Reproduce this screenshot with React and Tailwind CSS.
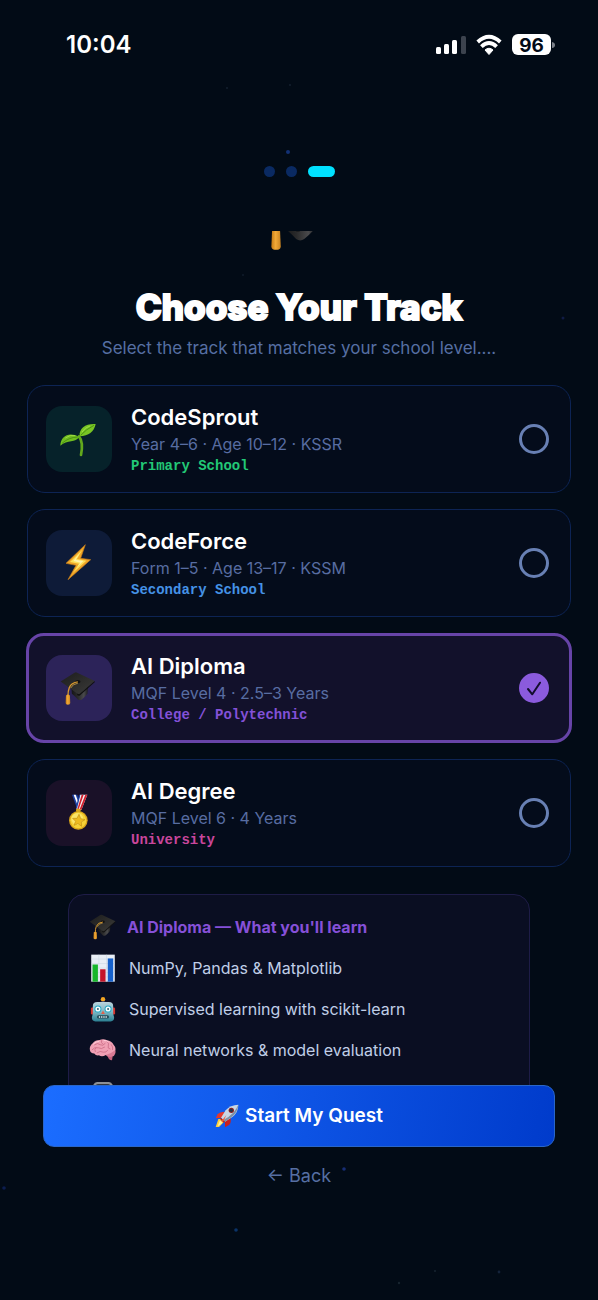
import { useState } from "react";

function CapIcon({ className }) {
  return (
    <svg viewBox="58 62 118 104" className={className} aria-hidden="true">
      <defs>
        <linearGradient id="skull" x1="0" x2="1">
          <stop offset="0" stopColor="#141414" />
          <stop offset="0.4" stopColor="#2a2a2b" />
          <stop offset="0.75" stopColor="#4a4a4c" />
          <stop offset="1" stopColor="#1b1b1c" />
        </linearGradient>
        <linearGradient id="board" x1="0" y1="0" x2="1" y2="1">
          <stop offset="0" stopColor="#1c1c1c" />
          <stop offset="1" stopColor="#3c3c3a" />
        </linearGradient>
        <linearGradient id="tassel" x1="0" x2="1">
          <stop offset="0" stopColor="#c47a14" />
          <stop offset="0.45" stopColor="#f3aa38" />
          <stop offset="1" stopColor="#c98320" />
        </linearGradient>
      </defs>
      <path d="M92 108 L94 130 Q104 138 112 147 Q118 151 124 147 Q134 139 141 130 L143 106 Z" fill="url(#skull)" />
      <path d="M60 93 L102 66 Q106 64 110 66 L163 91 L118 130 Q114 132 110 129 Z" fill="url(#board)" />
      <path d="M110 129 Q114 132 118 130 L163 91 L163 95 L118 135 Q114 137 110 134 Z" fill="#111" />
      <ellipse cx="112" cy="93" rx="8" ry="5" fill="#101010" />
      <path d="M112 94 Q92 96 86 112 Q82 122 82 138" fill="none" stroke="#d99a2e" strokeWidth="4" />
      <path d="M112 98 Q96 100 90 113" fill="none" stroke="#f0b94d" strokeWidth="2" />
      <path d="M76 135 Q82 130 88 135 L89 158 Q89 163 82 163 Q75 163 75 158 Z" fill="url(#tassel)" />
    </svg>
  );
}

function SproutIcon() {
  return (
    <svg viewBox="18 18 198 198" className="size-full" aria-hidden="true">
      <path d="M117 109 C129 124 126 150 123 165" fill="none" stroke="#62a91c" strokeWidth="8" strokeLinecap="round" />
      <path d="M61 137 C62 108 88 94 117 111 C108 129 82 119 61 137 Z" fill="#70bd20" />
      <path d="M119 109 C116 84 138 70 167 72 C162 96 146 107 119 109 Z" fill="#78c524" />
      <path d="M66 130 Q86 112 113 111 M122 106 Q138 88 162 76" fill="none" stroke="#4c9413" strokeWidth="3" />
      <path d="M76 114 Q90 103 106 107 M126 96 Q135 82 150 78" fill="none" stroke="#a0dc45" strokeWidth="3" />
    </svg>
  );
}

function BoltIcon() {
  return (
    <svg viewBox="18 18 198 198" className="size-full" aria-hidden="true">
      <path d="M136 62 L78 118 L108 124 L84 167 L152 107 L122 103 Z" fill="#f0a628" stroke="#c47a18" strokeWidth="2" strokeLinejoin="round" />
      <path d="M127 77 L90 114 L117 119 L99 146 L139 110 L111 105 Z" fill="#ffe15a" />
      <path d="M119 88 L100 111 L121 116 L112 128 L130 111 L107 107 Z" fill="#fff3ae" />
    </svg>
  );
}

function MedalIcon() {
  return (
    <svg viewBox="18 30 198 198" className="size-full" aria-hidden="true">
      <path d="M96 74 H112 L124 114 L112 118 Z" fill="#1b3fa0" />
      <path d="M101 74 H107 L121 114 L117 117 Z" fill="#fff" />
      <path d="M142 74 H120 L109 116 L124 120 Z" fill="#f3f3f6" />
      <path d="M142 74 H136 L119 118 L124 120 Z" fill="#d0202e" />
      <path d="M131 74 H125 L112 117 L116 118 Z" fill="#d0202e" />
      <path d="M121 74 H117 L108 112 L111 116 Z" fill="#1b3fa0" />
      <rect x="108" y="116" width="14" height="10" rx="4" fill="#d9a51a" />
      <circle cx="115" cy="151" r="28" fill="#d9a51a" />
      <circle cx="115" cy="151" r="24" fill="#f6d236" />
      <circle cx="112" cy="147" r="18" fill="#fbe468" />
      <path d="M117 133 L122 146 L135 149 L124 156 L125 169 L114 161 L102 166 L107 154 L98 145 L111 145 Z" fill="#edbb20" stroke="#c49111" strokeWidth="2" />
    </svg>
  );
}

function ChartIcon() {
  return (
    <svg viewBox="84 204 88 92" className="h-[30px] w-7" aria-hidden="true">
      <rect x="91" y="208" width="74" height="85" fill="#e9eef6" />
      <path d="M91 222H165M91 236H165M91 250H165M91 264H165M91 278H165M115 208V293M139 208V293" stroke="#c6d2e2" strokeWidth="1.5" />
      <rect x="95" y="239" width="17" height="54" fill="#16b62b" />
      <rect x="119" y="254" width="17" height="39" fill="#c4152a" />
      <rect x="143" y="220" width="17" height="73" fill="#1661cc" />
    </svg>
  );
}

function RobotIcon() {
  return (
    <svg viewBox="84 329 88 84" className="h-7 w-7" aria-hidden="true">
      <defs>
        <linearGradient id="bot" x1="0" y1="0" x2="0" y2="1">
          <stop offset="0" stopColor="#b9d3dc" />
          <stop offset="0.5" stopColor="#7fb9c5" />
          <stop offset="1" stopColor="#2b7f92" />
        </linearGradient>
      </defs>
      <rect x="90" y="366" width="10" height="22" rx="4" fill="#d6362f" />
      <rect x="156" y="366" width="10" height="22" rx="4" fill="#d6362f" />
      <path d="M118 351 Q128 341 139 351 Z" fill="#3a4a75" />
      <circle cx="128" cy="340" r="7" fill="#f5a623" />
      <path d="M96 362 Q96 349 110 349 H146 Q160 349 160 362 V386 L163 398 Q163 410 152 410 H104 Q93 410 93 398 L96 386 Z" fill="url(#bot)" />
      <circle cx="112" cy="371" r="11" fill="#1fa6c4" />
      <circle cx="144" cy="371" r="11" fill="#1fa6c4" />
      <circle cx="112" cy="371" r="8" fill="#f7ffff" />
      <circle cx="144" cy="371" r="8" fill="#f7ffff" />
      <circle cx="112" cy="371" r="3" fill="#2b5f70" />
      <circle cx="144" cy="371" r="3" fill="#2b5f70" />
      <path d="M128 376 L134 387 H122 Z" fill="#e0604b" />
      <rect x="109" y="391" width="38" height="10" rx="5" fill="#254b59" />
      <path d="M115 396H141" stroke="#e9f6f8" strokeWidth="5" strokeDasharray="4 3" />
    </svg>
  );
}

function BrainIcon() {
  return (
    <svg viewBox="84 461 90 76" className="h-6 w-7" aria-hidden="true">
      <path d="M140 510 Q146 532 158 532 Q162 522 156 508 Z" fill="#c4607c" />
      <path d="M87 500 Q84 486 96 477 Q104 467 118 467 Q130 462 142 468 Q157 470 163 482 Q172 491 168 503 Q168 513 156 514 Q148 520 138 515 Q126 522 116 516 Q106 518 101 510 Q88 510 87 500 Z" fill="#f0a0b4" />
      <path d="M138 515 Q148 526 164 518 Q172 508 168 500 Q156 510 138 515 Z" fill="#d97a94" />
      <path d="M94 498 Q102 488 114 492 Q124 498 134 490 M102 482 Q112 474 120 482 Q128 488 136 478 M124 469 Q122 476 128 480 M142 472 Q150 476 146 486 Q142 494 152 496 M110 508 Q120 500 130 506 Q140 508 144 500 M156 482 Q162 488 160 498 M104 504 Q100 496 106 492" fill="none" stroke="#c96984" strokeWidth="2.5" strokeLinecap="round" />
      <path d="M98 480 Q106 471 116 471 M132 468 Q140 468 146 472" fill="none" stroke="#ffd0da" strokeWidth="3" strokeLinecap="round" />
    </svg>
  );
}

function DeviceIcon() {
  return (
    <svg viewBox="0 0 28 24" className="h-6 w-7" aria-hidden="true">
      <path d="M2 22 Q2 3 8 3 H20 Q26 3 26 22 Z" fill="#8d9095" />
      <path d="M4 22 Q4 5 9 5 H19 Q24 5 24 22 Z" fill="#33353c" />
    </svg>
  );
}

function RocketIcon() {
  return (
    <svg viewBox="0 0 72 70" className="h-6 w-6" aria-hidden="true">
      <path d="M10 44 L24 44 L26 54 L12 68 L2 68 Z" fill="#ffcf3a" />
      <path d="M14 50 L22 50 L20 58 L8 66 Z" fill="#fff3a0" />
      <path d="M30 22 Q14 22 8 30 L2 42 L22 40 Z" fill="#e2382d" />
      <path d="M46 40 Q50 54 42 62 L30 69 L30 48 Z" fill="#c8201f" />
      <path d="M70 1 Q46 2 32 18 L18 40 L30 52 L52 38 Q70 24 70 1 Z" fill="#c9d6e4" />
      <path d="M70 1 Q68 24 50 38 L30 52 L25 47 Q58 30 70 1 Z" fill="#7d90a8" />
      <path d="M18 40 L30 52 L26 55 L15 44 Z" fill="#b5261f" />
      <circle cx="49" cy="18" r="8" fill="#8e2020" />
      <circle cx="49" cy="18" r="5" fill="#26334a" />
      <path d="M34 32 L18 52 L26 50 Z" fill="#ef5a3a" />
    </svg>
  );
}

const tracks = [
  {
    id: "sprout", name: "CodeSprout", detail: "Year 4–6 · Age 10–12 · KSSR", level: "Primary School",
    tile: "bg-[#06222a]", text: "text-[#22c876]", icon: <SproutIcon />,
  },
  {
    id: "force", name: "CodeForce", detail: "Form 1–5 · Age 13–17 · KSSM", level: "Secondary School",
    tile: "bg-[#0e1b38]", text: "text-[#4592e6]", icon: <BoltIcon />,
  },
  {
    id: "diploma", name: "AI Diploma", detail: "MQF Level 4 · 2.5–3 Years", level: "College / Polytechnic",
    tile: "bg-[#2c2359]", text: "text-[#8351d8]", icon: <CapIcon className="h-[35px] w-[39px]" />,
  },
  {
    id: "degree", name: "AI Degree", detail: "MQF Level 6 · 4 Years", level: "University",
    tile: "bg-[#1a1128]", text: "text-[#c9469b]", icon: <MedalIcon />,
  },
];

const lessons = [
  { label: "NumPy, Pandas & Matplotlib", icon: <ChartIcon /> },
  { label: "Supervised learning with scikit-learn", icon: <RobotIcon /> },
  { label: "Neural networks & model evaluation", icon: <BrainIcon /> },
  { label: "", icon: <DeviceIcon /> },
];

function TrackCard({ track, selected, onSelect }) {
  return (
    <label
      className={`flex cursor-pointer items-center rounded-[18px] ${
        selected
          ? "-mx-px border-3 border-[#6744a8] bg-[#12112b] px-[17px] py-4"
          : "border border-[#0d2454] bg-[#040c1b] px-[18px] py-[17px]"
      }`}
    >
      <span className={`flex size-[66px] shrink-0 items-center justify-center rounded-2xl ${track.tile}`}>
        {track.icon}
      </span>
      <span className="ml-[19px] flex flex-1 flex-col">
        <span className="text-[22px] leading-7 font-semibold text-white">{track.name}</span>
        <span className="text-[16px] leading-[26px] text-[#586da2]">{track.detail}</span>
        <span className={`font-['Liberation_Mono',monospace] text-[14px] leading-[18px] font-bold ${track.text}`}>{track.level}</span>
      </span>
      <span className="relative mr-[3px] size-[30px] shrink-0">
        <input
          type="radio"
          name="track"
          checked={selected}
          onChange={onSelect}
          className="block size-[30px] appearance-none rounded-full border-3 border-[#6880b4] checked:border-[#8b5bdd] checked:bg-[#8b5bdd]"
        />
        {selected && (
          <svg viewBox="0 0 30 30" className="pointer-events-none absolute inset-0" aria-hidden="true">
            <path d="M9 16 L13.3 21.3 L21 9.7" fill="none" stroke="#120d2c" strokeWidth="2" strokeLinecap="round" strokeLinejoin="round" />
          </svg>
        )}
      </span>
    </label>
  );
}

function StatusBar() {
  return (
    <div className="flex items-center justify-between pt-[29px] pr-[43px] pl-[66px] text-white">
      <span className="text-[24px] leading-8 font-semibold">10:04</span>
      <svg viewBox="0 0 119 22" className="h-[22px] w-[119px]" role="img" aria-label="Signal, Wi-Fi, battery 96 percent">
        <g fill="#fff">
          <rect x="0" y="13" width="5" height="7" rx="1.5" />
          <rect x="8" y="10" width="5" height="10" rx="1.5" />
          <rect x="16" y="6" width="5" height="14" rx="1.5" />
          <rect x="25" y="2" width="5" height="18" rx="1.5" fill="#3c434e" />
          <rect x="76" y="0" width="39" height="21" rx="6" />
          <path d="M116 8 Q119 8.500 119 11 Q119 13.500 116 14 Z" fill="#7b8088" />
          <path d="M53 20.500 L49 16 Q53 12.500 57 16 Z" stroke="#fff" strokeWidth="1" strokeLinejoin="round" />
        </g>
        <g fill="none" stroke="#fff" strokeWidth="3.800">
          <path d="M41.700 8 Q53 -2.500 64.300 8" />
          <path d="M45.400 12.600 Q53 5.400 60.600 12.600" />
        </g>
        <text x="95.500" y="17.500" textAnchor="middle" fontSize="19" fontWeight="700" fill="#030b17">96</text>
      </svg>
    </div>
  );
}

const stars = [
  [288, 152, 2, "#123175"], [227, 88, 1, "#14202f"], [290, 85, 1, "#14202f"], [243, 275, 1, "#111c2b"],
  [563, 318, 1.5, "#101b45"], [344, 1169, 1.8, "#172d74"], [236, 1230, 1.8, "#0b3368"], [4, 1188, 1.8, "#0c1d50"],
  [399, 1283, 1.2, "#172430"], [435, 1271, 1, "#172430"], [499, 1272, 1.4, "#14233a"],
];

export default function App() {
  const [selected, setSelected] = useState("diploma");
  return (
    <div className="relative flex h-screen min-h-[700px] flex-col bg-[#020b16] font-['Inter',sans-serif]">
      <svg className="pointer-events-none absolute inset-0 size-full" aria-hidden="true">
        {stars.map(([x, y, r, fill]) => <circle key={`${x}-${y}`} cx={x} cy={y} r={r} fill={fill} />)}
      </svg>
      <StatusBar />
      <div className="mt-[105px] flex shrink-0 justify-center gap-[11px]">
        <span className="size-[11px] rounded-full bg-[#0a2a62]" />
        <span className="size-[11px] rounded-full bg-[#0a2a62]" />
        <span className="h-[11px] w-[27px] rounded-full bg-[#00e1ff]" />
      </div>
      <main className="mt-[54px] min-h-0 flex-1 overflow-hidden px-[27px]">
        <CapIcon className="mx-auto -mt-[49px] h-[70px] w-[79px]" />
        <h1 className="mt-8 text-center text-[35px] leading-[46px] font-extrabold text-white [-webkit-text-stroke:2px_white]">
          Choose Your Track
        </h1>
        <p className="mt-[5px] text-center text-[17px] leading-[26px] text-[#566fa3]">
          Select the track that matches your school level....
        </p>
        <div role="radiogroup" aria-label="Track" className="mt-6 flex flex-col gap-4">
          {tracks.map((t) => (
            <TrackCard key={t.id} track={t} selected={selected === t.id} onSelect={() => setSelected(t.id)} />
          ))}
        </div>
        <section className="mx-[41px] mt-[27px] rounded-[16px] border border-[#1e1c47] bg-[#0a0e22] px-5 pt-[11px] pb-5">
          <h2 className="flex h-[41px] items-center text-[16px] font-bold text-[#8650d8]">
            <CapIcon className="mr-2 h-[26px] w-[30px]" />
            AI Diploma — What you'll learn
          </h2>
          <ul>
            {lessons.map((l, i) => (
              <li key={i} className="flex h-[41px] items-center gap-3 text-[16px] text-[#c0cee8]">
                {l.icon}
                {l.label}
              </li>
            ))}
          </ul>
        </section>
      </main>
      <footer className="flex shrink-0 flex-col items-center px-[43px] pb-[109px]">
        <button
          type="button"
          className="flex h-[62px] w-full items-center justify-center gap-[6px] rounded-[11px] border border-[#2a66c8] bg-linear-[100deg] from-[#1b6dff] to-[#003bcb] text-[19px] font-semibold text-white"
        >
          <RocketIcon />
          Start My Quest
        </button>
        <button type="button" className="mt-3 h-8 px-3 text-[18px] text-[#566fa3]">← Back</button>
      </footer>
    </div>
  );
}
